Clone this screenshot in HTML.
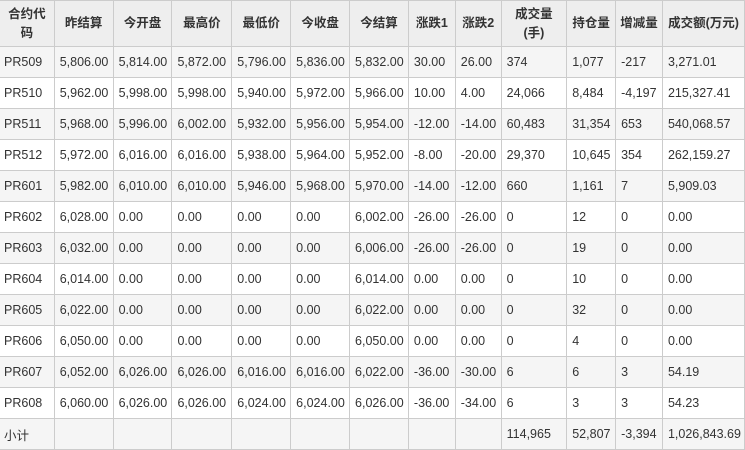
<!DOCTYPE html>
<html><head><meta charset="utf-8"><style>
body{margin:0;background:#fff;width:745px;height:447px;overflow:hidden}
table{border-collapse:collapse;table-layout:fixed;font-family:"Liberation Sans","Noto Sans CJK SC",sans-serif;font-size:12.5px;color:#333;margin-left:-1px}
td,th{border:1px solid #ccc;padding:0 0 0 5px;height:30px;text-align:left;white-space:nowrap;overflow:hidden}
th{background:#eee;font-weight:bold;height:45px;text-align:center;padding:0;line-height:19px;font-size:12.5px}
tr:nth-child(even) td{background:#f5f5f5}
tr:nth-child(odd) td{background:#fff}
td:first-child{padding-left:4px}
</style></head><body>
<table>
<colgroup><col style="width:55px"><col style="width:59px"><col style="width:59px"><col style="width:60px"><col style="width:59px"><col style="width:59px"><col style="width:59px"><col style="width:47px"><col style="width:46px"><col style="width:66px"><col style="width:49px"><col style="width:47px"><col style="width:82px"></colgroup>
<tr><th>合约代<br>码</th><th>昨结算</th><th>今开盘</th><th>最高价</th><th>最低价</th><th>今收盘</th><th>今结算</th><th>涨跌1</th><th>涨跌2</th><th>成交量<br>(手)</th><th>持仓量</th><th>增减量</th><th>成交额(万元)</th></tr>
<tr><td>PR509</td><td>5,806.00</td><td>5,814.00</td><td>5,872.00</td><td>5,796.00</td><td>5,836.00</td><td>5,832.00</td><td>30.00</td><td>26.00</td><td>374</td><td>1,077</td><td>-217</td><td>3,271.01</td></tr>
<tr><td>PR510</td><td>5,962.00</td><td>5,998.00</td><td>5,998.00</td><td>5,940.00</td><td>5,972.00</td><td>5,966.00</td><td>10.00</td><td>4.00</td><td>24,066</td><td>8,484</td><td>-4,197</td><td>215,327.41</td></tr>
<tr><td>PR511</td><td>5,968.00</td><td>5,996.00</td><td>6,002.00</td><td>5,932.00</td><td>5,956.00</td><td>5,954.00</td><td>-12.00</td><td>-14.00</td><td>60,483</td><td>31,354</td><td>653</td><td>540,068.57</td></tr>
<tr><td>PR512</td><td>5,972.00</td><td>6,016.00</td><td>6,016.00</td><td>5,938.00</td><td>5,964.00</td><td>5,952.00</td><td>-8.00</td><td>-20.00</td><td>29,370</td><td>10,645</td><td>354</td><td>262,159.27</td></tr>
<tr><td>PR601</td><td>5,982.00</td><td>6,010.00</td><td>6,010.00</td><td>5,946.00</td><td>5,968.00</td><td>5,970.00</td><td>-14.00</td><td>-12.00</td><td>660</td><td>1,161</td><td>7</td><td>5,909.03</td></tr>
<tr><td>PR602</td><td>6,028.00</td><td>0.00</td><td>0.00</td><td>0.00</td><td>0.00</td><td>6,002.00</td><td>-26.00</td><td>-26.00</td><td>0</td><td>12</td><td>0</td><td>0.00</td></tr>
<tr><td>PR603</td><td>6,032.00</td><td>0.00</td><td>0.00</td><td>0.00</td><td>0.00</td><td>6,006.00</td><td>-26.00</td><td>-26.00</td><td>0</td><td>19</td><td>0</td><td>0.00</td></tr>
<tr><td>PR604</td><td>6,014.00</td><td>0.00</td><td>0.00</td><td>0.00</td><td>0.00</td><td>6,014.00</td><td>0.00</td><td>0.00</td><td>0</td><td>10</td><td>0</td><td>0.00</td></tr>
<tr><td>PR605</td><td>6,022.00</td><td>0.00</td><td>0.00</td><td>0.00</td><td>0.00</td><td>6,022.00</td><td>0.00</td><td>0.00</td><td>0</td><td>32</td><td>0</td><td>0.00</td></tr>
<tr><td>PR606</td><td>6,050.00</td><td>0.00</td><td>0.00</td><td>0.00</td><td>0.00</td><td>6,050.00</td><td>0.00</td><td>0.00</td><td>0</td><td>4</td><td>0</td><td>0.00</td></tr>
<tr><td>PR607</td><td>6,052.00</td><td>6,026.00</td><td>6,026.00</td><td>6,016.00</td><td>6,016.00</td><td>6,022.00</td><td>-36.00</td><td>-30.00</td><td>6</td><td>6</td><td>3</td><td>54.19</td></tr>
<tr><td>PR608</td><td>6,060.00</td><td>6,026.00</td><td>6,026.00</td><td>6,024.00</td><td>6,024.00</td><td>6,026.00</td><td>-36.00</td><td>-34.00</td><td>6</td><td>3</td><td>3</td><td>54.23</td></tr>
<tr><td>小计</td><td></td><td></td><td></td><td></td><td></td><td></td><td></td><td></td><td>114,965</td><td>52,807</td><td>-3,394</td><td>1,026,843.69</td></tr>
</table>
</body></html>
